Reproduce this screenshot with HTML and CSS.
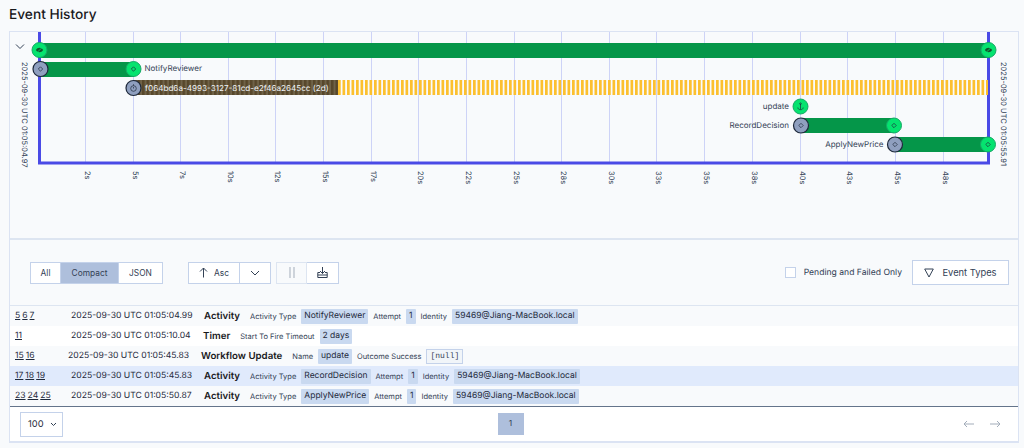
FILE: index.html
```html
<!DOCTYPE html>
<html lang="en">
<head>
<meta charset="utf-8">
<title>Event History</title>
<link rel="stylesheet" href="styles.css">
</head>
<body>
<h1 class="title">Event History</h1>
<main class="panel">
  <section class="chart">
    <svg class="chart-svg" width="1008" height="206" viewBox="10 32 1008 206" xmlns="http://www.w3.org/2000/svg">
      <defs>
        <pattern id="wait" width="4.500" height="15" patternUnits="userSpaceOnUse" x="338" y="80">
          <rect width="2.700" height="15" fill="#fcc02e"/>
        </pattern>
        <pattern id="elapsed" width="4.500" height="15" patternUnits="userSpaceOnUse" x="133" y="80">
          <rect width="4.500" height="15" fill="#6f6248"/>
          <rect width="2.500" height="15" fill="#57472b"/>
        </pattern>
        <g id="diamond"><path d="M0-2.200 2.200 0 0 2.200-2.200 0Z" fill="none" stroke="#1e293b" stroke-width=".7"/></g>
        <g id="eye"><path d="M-3.600 0C-2-3 2-3 3.600 0 2 3-2 3-3.600 0Z" fill="#14532d"/><path d="M-2.400 2.400 2.600-2.400" stroke="#05e36f" stroke-width=".8"/></g>
      </defs>
      <g class="grid">
        <path d="M85.500 32V163M133.500 32V163M180.500 32V163M228.500 32V163M275.500 32V163M323.500 32V163M371.500 32V163M418.500 32V163M466.500 32V163M514.500 32V163M561.500 32V163M609.500 32V163M656.500 32V163M704.500 32V163M752.500 32V163M800.500 32V163M847.500 32V163M895.500 32V163M943.500 32V163"/>
      </g>
      <path class="axis" d="M39.500 32V163H988.500V32"/>
      <rect class="bar" x="39" y="43" width="950" height="15"/>
      <rect class="bar" x="40" y="62" width="94" height="15"/>
      <rect x="133" y="80" width="205" height="15" fill="url(#elapsed)"/>
      <rect x="338" y="80" width="650" height="15" fill="url(#wait)"/>
      <rect class="bar" x="801" y="118" width="93" height="15"/>
      <rect class="bar" x="895" y="137" width="93" height="15"/>

      <path class="caret" d="M16 44.500 20 48.500 24 44.500"/>

      <g class="tl-text">
        <text x="144.500" y="71">NotifyReviewer</text>
        <text x="145" y="90.500" class="tl-light">f064bd6a-4993-3127-81cd-e2f46a2645cc (2d)</text>
        <text x="789" y="109" text-anchor="end">update</text>
        <text x="789" y="128" text-anchor="end">RecordDecision</text>
        <text x="883.500" y="147" text-anchor="end">ApplyNewPrice</text>
      </g>
      <g class="tl-date">
        <text transform="translate(22 62) rotate(90)">2025-09-30 UTC 01:05:04.97</text>
        <text transform="translate(1000.500 62) rotate(90)">2025-09-30 UTC 01:05:55.91</text>
      </g>
      <g class="tl-tick">
        <text transform="translate(85 171) rotate(90)">2s</text>
        <text transform="translate(133 171) rotate(90)">5s</text>
        <text transform="translate(180 171) rotate(90)">7s</text>
        <text transform="translate(228 171) rotate(90)">10s</text>
        <text transform="translate(275 171) rotate(90)">12s</text>
        <text transform="translate(323 171) rotate(90)">15s</text>
        <text transform="translate(371 171) rotate(90)">17s</text>
        <text transform="translate(418 171) rotate(90)">20s</text>
        <text transform="translate(466 171) rotate(90)">22s</text>
        <text transform="translate(514 171) rotate(90)">25s</text>
        <text transform="translate(561 171) rotate(90)">28s</text>
        <text transform="translate(609 171) rotate(90)">30s</text>
        <text transform="translate(656 171) rotate(90)">33s</text>
        <text transform="translate(704 171) rotate(90)">35s</text>
        <text transform="translate(752 171) rotate(90)">38s</text>
        <text transform="translate(800 171) rotate(90)">40s</text>
        <text transform="translate(847 171) rotate(90)">43s</text>
        <text transform="translate(895 171) rotate(90)">45s</text>
        <text transform="translate(943 171) rotate(90)">48s</text>
      </g>

      <circle class="node-on" cx="39.500" cy="50" r="7.500"/><use href="#eye" x="39.500" y="50"/>
      <circle class="node-on" cx="988.500" cy="50" r="7.500"/><use href="#eye" x="988.500" y="50"/>
      <circle class="node-off" cx="40.500" cy="69" r="7.500"/><use href="#diamond" x="40.500" y="69"/>
      <circle class="node-on" cx="133.500" cy="69" r="7.500"/><use href="#diamond" x="133.500" y="69"/>
      <circle class="node-off" cx="133.500" cy="88" r="7.500"/>
      <g class="tiny-icon"><circle cx="133.500" cy="88.500" r="2.800"/><path d="M133.500 84.200V85.700M133.500 88.500V87"/></g>
      <circle class="node-on" cx="800.500" cy="106.500" r="7.500"/>
      <g class="tiny-icon"><path d="M800.500 104V109.500M797.800 107.500C798 109 799 109.700 800.500 109.700S803 109 803.200 107.500"/><circle cx="800.500" cy="103.700" r=".8"/></g>
      <circle class="node-off" cx="801" cy="125.500" r="7.500"/><use href="#diamond" x="801" y="125.500"/>
      <circle class="node-on" cx="894" cy="125.500" r="7.500"/><use href="#diamond" x="894" y="125.500"/>
      <circle class="node-off" cx="895" cy="144.500" r="7.500"/><use href="#diamond" x="895" y="144.500"/>
      <circle class="node-on" cx="988" cy="144.500" r="7.500"/><use href="#diamond" x="988" y="144.500"/>
    </svg>
  </section>

  <section class="controls">
    <div class="btn-group">
      <button class="btn btn-all">All</button>
      <button class="btn btn-compact is-active">Compact</button>
      <button class="btn btn-json">JSON</button>
    </div>
    <div class="btn-group group-sort">
      <button class="btn btn-asc">
        <svg class="ico" width="9" height="11" viewBox="0 0 9 11"><path d="M4.500 10.500V1M1 4.500 4.500 1 8 4.500"/></svg>
        Asc
      </button>
      <button class="btn btn-caret" aria-label="Sort options">
        <svg class="ico" width="10" height="6" viewBox="0 0 10 6"><path d="M1 1 5 5 9 1"/></svg>
      </button>
    </div>
    <div class="btn-group group-tools">
      <button class="btn btn-pause" aria-label="Pause">
        <svg class="ico ico-muted" width="6" height="11" viewBox="0 0 6 11"><path d="M1 0V11M5 0V11"/></svg>
      </button>
      <button class="btn btn-download" aria-label="Download">
        <svg class="ico" width="11" height="11" viewBox="0 0 11 11"><path d="M5.500 0V6.500M3 4 5.500 6.500 8 4M3 5.500H.8V10.500H10.200V5.500H8M.8 8H10.200"/></svg>
      </button>
    </div>
    <label class="pending"><span class="checkbox"></span>Pending and Failed Only</label>
    <button class="btn-types">
      <svg class="ico" width="10" height="10" viewBox="0 0 10 10"><path d="M.7 1H9.300L5 9Z"/></svg>
      Event Types
    </button>
  </section>

  <section class="rows">
    <div class="row row-alt">
      <span class="ids"><a>5</a><a>6</a><a>7</a></span>
      <span class="ts">2025-09-30 UTC 01:05:04.99</span>
      <span class="kind">Activity</span>
      <span class="lbl">Activity Type</span><span class="chip">NotifyReviewer</span>
      <span class="lbl">Attempt</span><span class="chip">1</span>
      <span class="lbl">Identity</span><span class="chip">59469@Jiang-MacBook.local</span>
    </div>
    <div class="row row-plain">
      <span class="ids"><a>11</a></span>
      <span class="ts">2025-09-30 UTC 01:05:10.04</span>
      <span class="kind">Timer</span>
      <span class="lbl">Start To Fire Timeout</span><span class="chip">2 days</span>
    </div>
    <div class="row row-alt row-wide">
      <span class="ids"><a>15</a><a>16</a></span>
      <span class="ts">2025-09-30 UTC 01:05:45.83</span>
      <span class="kind">Workflow Update</span>
      <span class="lbl">Name</span><span class="chip">update</span>
      <span class="lbl">Outcome Success</span><span class="code">[null]</span>
    </div>
    <div class="row row-hover">
      <span class="ids"><a>17</a><a>18</a><a>19</a></span>
      <span class="ts">2025-09-30 UTC 01:05:45.83</span>
      <span class="kind">Activity</span>
      <span class="lbl">Activity Type</span><span class="chip">RecordDecision</span>
      <span class="lbl">Attempt</span><span class="chip">1</span>
      <span class="lbl">Identity</span><span class="chip">59469@Jiang-MacBook.local</span>
    </div>
    <div class="row row-alt">
      <span class="ids"><a>23</a><a>24</a><a>25</a></span>
      <span class="ts">2025-09-30 UTC 01:05:50.87</span>
      <span class="kind">Activity</span>
      <span class="lbl">Activity Type</span><span class="chip">ApplyNewPrice</span>
      <span class="lbl">Attempt</span><span class="chip">1</span>
      <span class="lbl">Identity</span><span class="chip">59469@Jiang-MacBook.local</span>
    </div>
  </section>

  <footer class="pager">
    <div class="pager-size">100
      <svg class="ico" width="7" height="5" viewBox="0 0 7 5"><path d="M1 1 3.500 3.500 6 1"/></svg>
    </div>
    <div class="pager-page">1</div>
    <div class="pager-arrows">
      <svg class="ico ico-muted" width="11" height="8" viewBox="0 0 11 8"><path d="M11 4H1M4 1 1 4 4 7"/></svg>
      <svg class="ico ico-muted" width="11" height="8" viewBox="0 0 11 8"><path d="M0 4H10M7 1 10 4 7 7"/></svg>
    </div>
  </footer>
</main>
</body>
</html>
```

FILE: styles.css
```css
* { box-sizing: border-box; }
html, body { margin: 0; padding: 0; }
body {
  background: #f8fafc;
  color: #1e293b;
  font-family: Inter, "Liberation Sans", sans-serif;
  text-rendering: geometricPrecision;
  width: 1024px;
  height: 448px;
  overflow: hidden;
  padding: 0 5px 0 9px;
}
.title {
  margin: 0;
  height: 31px;
  padding-top: 5px;
  font-size: 13.700px;
  line-height: 20px;
  font-weight: 500;
  color: #18181b;
}
.panel {
  width: 1010px;
  border: 1px solid #dbe3f3;
  border-bottom-width: 2px;
  background: #f8fafc;
}
.chart { height: 208px; border-bottom: 2px solid #dde5f1; }
.chart-svg { display: block; }
.grid path { stroke: #cdd3f7; stroke-width: 1; fill: none; }
.axis { stroke: #4a4ae6; stroke-width: 3; fill: none; }
.bar { fill: #059649; }
.caret { fill: none; stroke: #334155; stroke-width: 1; }
.tl-text text { font-size: 8px; fill: #334155; }
.tl-text .tl-light { font-size: 8.150px; fill: #f1f5f9; }
.tl-date text { font-size: 7.500px; fill: #334155; }
.tl-tick text { font-size: 7.500px; fill: #334155; }
.node-on { fill: #05e36f; stroke: #16a765; stroke-width: 1; }
.node-off { fill: #8f9fbf; stroke: #1e293b; stroke-width: 1.200; }
.tiny-icon { fill: none; stroke: #1e293b; stroke-width: .7; }

.controls {
  height: 66px;
  display: flex;
  align-items: center;
  padding-left: 20px;
  padding-right: 9px;
  border-bottom: 1px solid #dde5f1;
}
.btn-group { display: flex; height: 22px; }
.btn {
  height: 22px;
  padding: 0;
  border: 1px solid #c4d2ea;
  background: #fff;
  font: 400 8.400px Inter, sans-serif;
  color: #334155;
  display: flex;
  align-items: center;
  justify-content: center;
  gap: 6px;
}
.btn + .btn { border-left: 0; }
.btn-all { width: 31px; }
.btn-compact { width: 58px; }
.btn-json { width: 44px; }
.is-active { background: #aebfdc; }
.group-sort { margin-left: 25px; }
.group-tools { margin-left: 5px; }
.btn-asc { width: 52px; }
.btn-caret { width: 31px; }
.btn-pause { width: 31px; background: #f8fafc; border-color: #dde5f1; }
.btn-download { width: 32px; }
.ico { fill: none; stroke: #334155; stroke-width: 1; display: block; flex: none; }
.ico-muted { stroke: #a3adba; }
.pending {
  margin-left: auto;
  display: flex;
  align-items: center;
  gap: 8px;
  font-size: 8.600px;
  color: #334155;
}
.checkbox {
  width: 11px;
  height: 11px;
  border: 1px solid #c4d2ea;
  background: #fff;
}
.btn-types {
  margin-left: 10px;
  width: 97px;
  height: 25px;
  border: 1px solid #c4d2ea;
  background: #fff;
  font: 400 9.330px Inter, sans-serif;
  color: #334155;
  display: flex;
  align-items: center;
  justify-content: center;
  gap: 8px;
}

.rows { border-bottom: 1px solid #64748b; }
.row {
  height: 20px;
  display: flex;
  align-items: center;
  padding-left: 5px;
}
.row-alt { background: #f8fafc; }
.row-plain { background: #fff; }
.row-hover { background: #e0eafc; }
.ids {
  width: 56px;
  flex: none;
  display: flex;
  gap: 2px;
  font-size: 8.600px;
}
.ids a { text-decoration: underline; color: #1e293b; }
.ts { width: 133px; flex: none; font-size: 8.600px; color: #1e293b; white-space: nowrap; }
.row-wide .ts { margin-left: -3px; }
.kind { font-size: 9.700px; font-weight: 600; margin-right: 10px; color: #18181b; white-space: nowrap; }
.row-plain .kind { margin-left: -1px; }
.row-wide .kind { margin-left: 0; }
.lbl { font-size: 7.500px; color: #334155; margin-right: 5px; white-space: nowrap; }
.chip {
  font-size: 8.500px;
  line-height: 15px;
  padding: 0 3px;
  background: #c9d9f0;
  border-radius: 1px;
  margin-right: 5px;
  white-space: nowrap;
  color: #1e293b;
}
.code {
  font-family: "Liberation Mono", monospace;
  font-size: 8px;
  line-height: 13px;
  padding: 0 3px;
  border: 1px solid #c4d2ea;
  background: #f1f5f9;
  color: #334155;
}

.pager {
  height: 34px;
  background: #fff;
  display: grid;
  grid-template-columns: 1fr auto 1fr;
  align-items: center;
  padding: 0 17px 0 10px;
}
.pager-size {
  width: 43px;
  height: 25px;
  border: 1px solid #c4d2ea;
  background: #fff;
  font-size: 9.330px;
  color: #1e293b;
  display: flex;
  align-items: center;
  justify-content: space-between;
  padding: 0 5px 0 7px;
}
.pager-page {
  width: 26px;
  height: 22px;
  background: #aebfdc;
  font-size: 8.400px;
  color: #334155;
  display: flex;
  align-items: center;
  justify-content: center;
}
.pager-arrows { justify-self: end; display: flex; gap: 16px; }
```
